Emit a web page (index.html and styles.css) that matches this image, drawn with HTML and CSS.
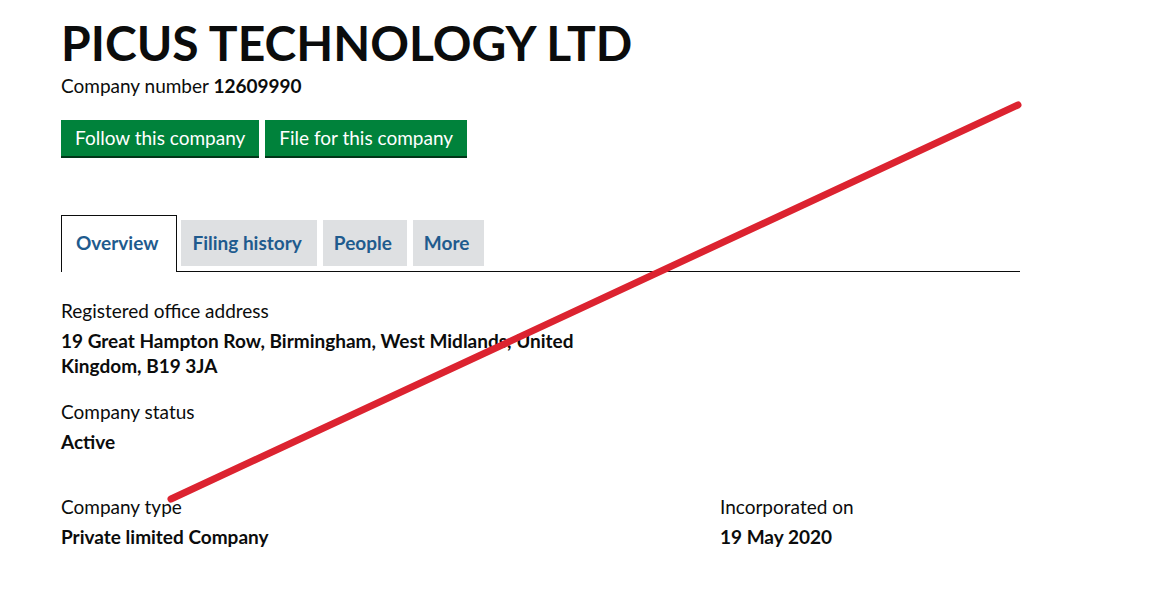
FILE: index.html
```html
<!DOCTYPE html>
<html lang="en">
<head>
    <meta charset="UTF-8">
    <meta name="viewport" content="width=device-width, initial-scale=1.0">
    <title>PICUS TECHNOLOGY LTD - Overview</title>
    <link rel="stylesheet" href="styles.css">
</head>
<body>
    <div class="page">
        <h1 class="company-name">PICUS TECHNOLOGY LTD</h1>
        <p class="company-number">Company number <strong>12609990</strong></p>

        <div class="actions">
            <a class="button" href="#">Follow this company</a>
            <a class="button" href="#">File for this company</a>
        </div>

        <ul class="tabs">
            <li class="tab active"><a href="#">Overview</a></li>
            <li class="tab"><a href="#">Filing history</a></li>
            <li class="tab"><a href="#">People</a></li>
            <li class="tab"><a href="#">More</a></li>
        </ul>

        <dl class="detail address">
            <dt>Registered office address</dt>
            <dd>19 Great Hampton Row, Birmingham, West Midlands, United Kingdom, B19 3JA</dd>
        </dl>

        <dl class="detail status">
            <dt>Company status</dt>
            <dd>Active</dd>
        </dl>

        <div class="detail-row">
            <dl class="detail">
                <dt>Company type</dt>
                <dd>Private limited Company</dd>
            </dl>
            <dl class="detail">
                <dt>Incorporated on</dt>
                <dd>19 May 2020</dd>
            </dl>
        </div>
    </div>

    <svg class="strike" width="1152" height="596" viewBox="0 0 1152 596">
        <line x1="171" y1="499" x2="1018" y2="105" stroke="#dc2330" stroke-width="7" stroke-linecap="round"/>
    </svg>
</body>
</html>
```

FILE: styles.css
```css
body {
    font-family: Lato, "Liberation Sans", sans-serif;
    background-color: #fff;
    color: #0b0c0c;
    margin: 0;
    padding: 0;
}
.page {
    width: 959px;
    margin-left: 61px;
    padding-top: 15px;
}
.company-name {
    font-size: 48px;
    font-weight: 700;
    line-height: 56px;
    margin: 0;
}
.company-number {
    font-size: 19px;
    line-height: 25px;
    margin: 2px 0 0;
}
.actions {
    display: flex;
    gap: 6px;
    margin-top: 22px;
}
.button {
    display: block;
    background-color: #00823b;
    color: #fff;
    font-size: 19px;
    line-height: 22px;
    padding: 7px 14px;
    text-decoration: none;
    box-shadow: 0 2px 0 #003618;
}
.tabs {
    display: flex;
    align-items: flex-start;
    gap: 6px;
    list-style: none;
    margin: 59px 0 0;
    padding: 0;
    border-bottom: 1px solid #0b0c0c;
}
.tab {
    margin: 5px 0;
    background-color: #dee0e2;
}
.tab a {
    display: block;
    padding: 12px 15px 12px 11px;
    font-size: 19px;
    line-height: 22px;
    font-weight: 700;
    color: #1f5b8e;
    text-decoration: none;
}
.tab.active {
    margin: 0 -2px -1px 0;
    background-color: #fff;
    border: 1px solid #0b0c0c;
    border-bottom: 0;
}
.tab.active a {
    padding: 16px 18px 18px 14px;
}
.detail {
    margin: 0;
}
.detail dt {
    font-size: 19px;
    line-height: 25px;
}
.detail dd {
    margin: 5px 0 0;
    font-size: 19px;
    line-height: 25px;
    font-weight: 700;
}
.address {
    padding-top: 26px;
}
.address dd {
    width: 585px;
}
.status {
    padding-top: 21px;
}
.detail-row {
    display: grid;
    grid-template-columns: 659px 1fr;
    padding-top: 40px;
}
.strike {
    position: absolute;
    top: 0;
    left: 0;
    pointer-events: none;
}
```
